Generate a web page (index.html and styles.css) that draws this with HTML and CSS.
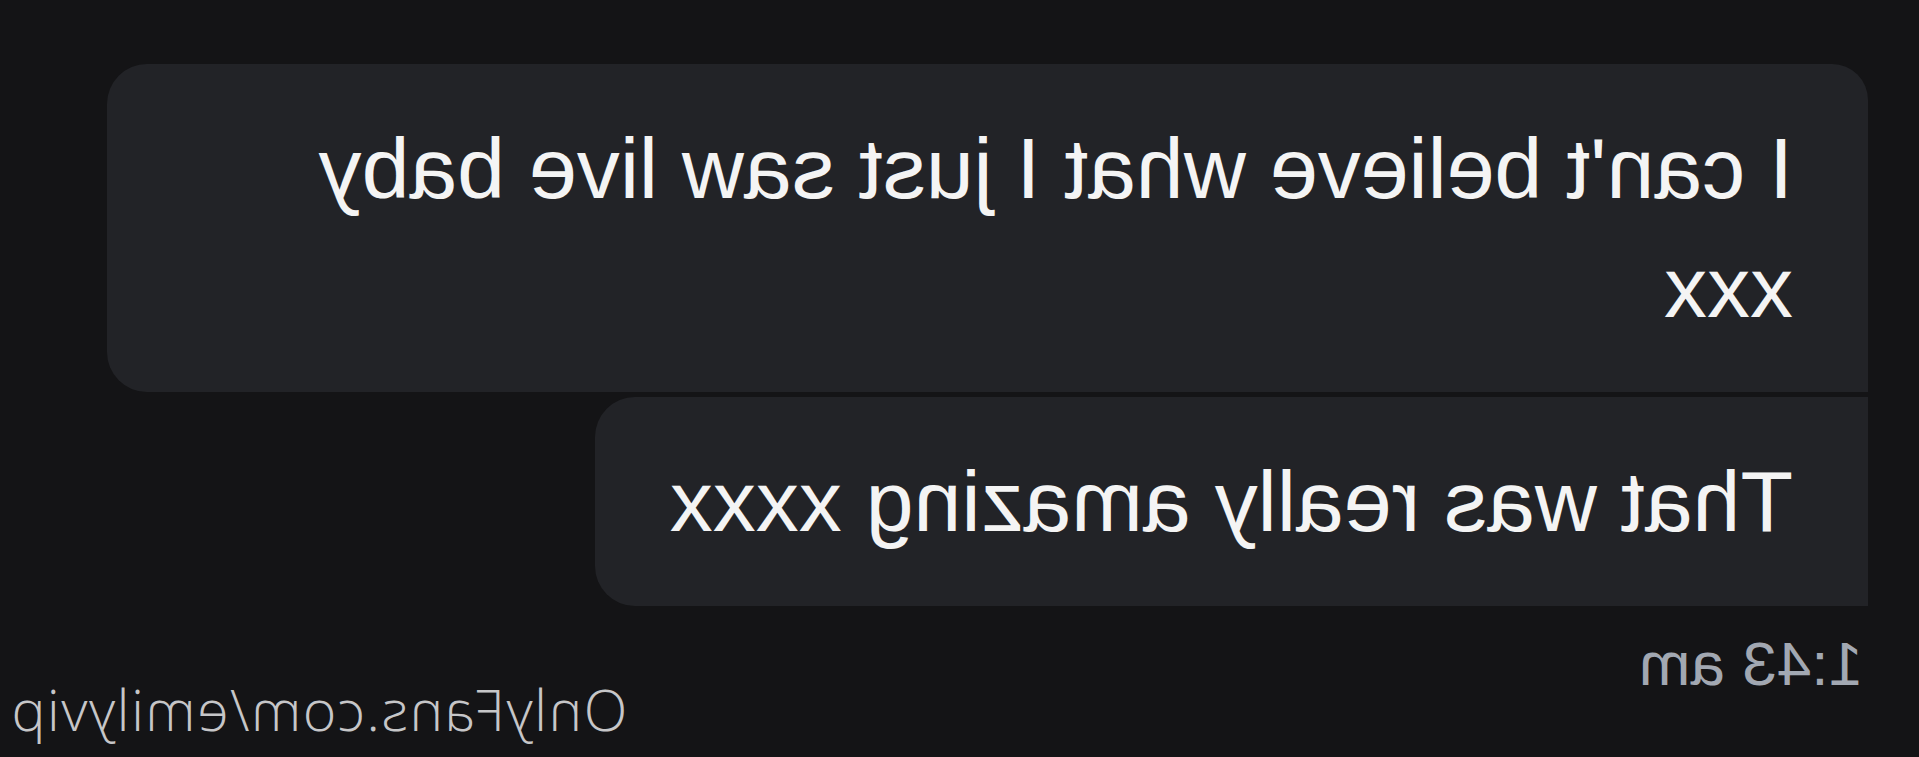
FILE: index.html
```html
<!DOCTYPE html>
<html lang="en">
<head>
    <meta charset="UTF-8">
    <meta name="viewport" content="width=device-width, initial-scale=1.0">
    <title>Chat</title>
    <link rel="stylesheet" href="styles.css">
</head>
<body>
    <div class="screen">
        <div class="thread">
            <div class="bubble first">I can't believe what I just saw live baby xxx</div>
            <div class="bubble last">That was really amazing xxxx</div>
            <div class="footer">
                <div class="time">1:43 am</div>
                <div class="watermark">OnlyFans.com/emilyvip</div>
            </div>
        </div>
    </div>
</body>
</html>
```

FILE: styles.css
```css
body {
    margin: 0;
    background-color: #141416;
    font-family: "Liberation Sans", Arial, sans-serif;
    overflow: hidden;
}
.screen {
    width: 1919px;
    height: 757px;
    transform: scaleX(-1);
    background-color: #141416;
}
.thread {
    display: flex;
    flex-direction: column;
    align-items: flex-start;
    padding: 64px 10px 0 51px;
}
.bubble {
    box-sizing: border-box;
    max-width: 1761px;
    padding: 45px 75px 45px;
    background-color: #222327;
    color: #f4f4f4;
    font-size: 86px;
    line-height: 119px;
}
.first {
    border-radius: 36px 40px 40px 0;
    margin-bottom: 5px;
}
.last {
    border-radius: 0 40px 40px 0;
}
.footer {
    align-self: stretch;
    display: flex;
    justify-content: space-between;
    align-items: flex-start;
    margin-top: 23px;
}
.time {
    margin-left: 5px;
    font-size: 62px;
    line-height: 70px;
    color: #a2a8b2;
}
.watermark {
    margin-top: 52px;
    font-family: "Open Sans", sans-serif;
    font-weight: 300;
    font-size: 57px;
    line-height: 56px;
    letter-spacing: 1.5px;
    color: #c6c6c8;
}
```
